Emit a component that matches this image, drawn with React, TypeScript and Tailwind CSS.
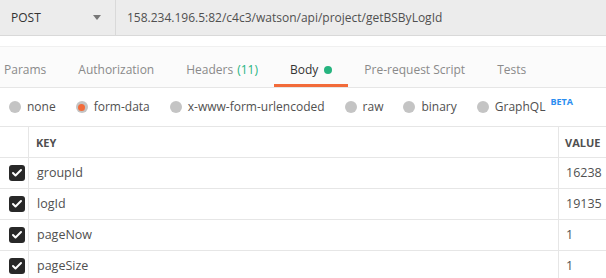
import { Check } from 'lucide-react';

const tabs = [
  { label: 'Params' },
  { label: 'Authorization' },
  { label: 'Headers', count: '(11)' },
  { label: 'Body', active: true, dot: true },
  { label: 'Pre-request Script' },
  { label: 'Tests' },
];

const bodyTypes = [
  { label: 'none' },
  { label: 'form-data', selected: true },
  { label: 'x-www-form-urlencoded' },
  { label: 'raw' },
  { label: 'binary' },
  { label: 'GraphQL', beta: true },
];

const params = [
  { key: 'groupId', value: '16238' },
  { key: 'logId', value: '19135' },
  { key: 'pageNow', value: '1' },
  { key: 'pageSize', value: '1' },
];

export default function App() {
  return (
    <div className="w-[606px] h-[278px] overflow-hidden bg-white text-[12px] whitespace-nowrap text-[#505050] font-['Open_Sans',sans-serif]">
      {/* url bar */}
      <div className="flex h-[36px] bg-[#ececec] border-b border-[#d9d9d9]">
        <div className="flex w-[116px] items-center justify-between border-r border-[#d9d9d9] pl-[11px] pr-[14px]">
          <span className="text-[#333]">POST</span>
          <span className="h-0 w-0 border-x-[4px] border-t-[5px] border-x-transparent border-t-[#777]" />
        </div>
        <div className="flex items-center pl-[11px] text-[#505050]">
          158.234.196.5:82/c4c3/watson/api/project/getBSByLogId
        </div>
      </div>

      {/* tabs */}
      <div className="mt-[10px] border-t border-[#f0f0f0] bg-[#fbfbfb]">
        <div className="flex h-[41px] -ml-[12px] border-b border-[#e6e6e6]">
          {tabs.map((t) => (
            <div
              key={t.label}
              className={
                t.active
                  ? 'flex items-center px-[16px] pt-[9px] border-b-[3px] border-[#f26b3a] text-[#333]'
                  : 'flex items-center px-[16px] pt-[9px] border-b-[3px] border-transparent text-[#8a8a8a]'
              }
            >
              <span>{t.label}</span>
              {t.count && <span className="ml-[4px] text-[#26b47f]">{t.count}</span>}
              {t.dot && <span className="ml-[6px] h-[8px] w-[8px] rounded-full bg-[#26b47f]" />}
            </div>
          ))}
        </div>
      </div>

      {/* body types */}
      <div className="flex h-[39px] items-center gap-[20px] pl-[9px] border-b border-[#e6e6e6]">
        {bodyTypes.map((b) => (
          <div key={b.label} className="flex items-center gap-[6px]">
            <span className="flex h-[12px] w-[12px] items-center justify-center rounded-full bg-[#c4c4c4]">
              {b.selected && <span className="h-[7px] w-[7px] rounded-full bg-[#f26b3a]" />}
            </span>
            <span className="text-[#505050]">{b.label}</span>
            {b.beta && (
              <span className="-ml-[1px] -mt-[10px] text-[9px] font-bold text-[#2a8df0]">BETA</span>
            )}
          </div>
        ))}
      </div>

      {/* table */}
      <div className="grid grid-cols-[29px_529px_48px]">
        <div className="h-[31px] border-r border-b border-[#e6e6e6]" />
        <div className="flex h-[31px] items-center pl-[7px] pt-[2px] border-b border-[#e6e6e6] text-[11px] font-bold text-[#505050]">
          KEY
        </div>
        <div className="flex h-[31px] items-center pl-[6px] pt-[2px] border-l border-b border-[#e6e6e6] text-[11px] font-bold text-[#505050]">
          VALUE
        </div>
        {params.map((p) => (
          <>
            <div key={p.key + 'c'} className="flex h-[31px] items-center pl-[9px] border-r border-b border-[#e6e6e6]">
              <span className="flex h-[16px] w-[16px] items-center justify-center rounded-[3px] bg-[#282828]">
                <Check className="h-[12px] w-[12px] text-white" strokeWidth={4} />
              </span>
            </div>
            <div key={p.key + 'k'} className="flex h-[31px] items-center pl-[8px] border-b border-[#e6e6e6] text-[12.5px]">
              {p.key}
            </div>
            <div key={p.key + 'v'} className="flex h-[31px] items-center pl-[7px] border-l border-b border-[#e6e6e6] text-[12.5px]">
              {p.value}
            </div>
          </>
        ))}
      </div>
    </div>
  );
}
